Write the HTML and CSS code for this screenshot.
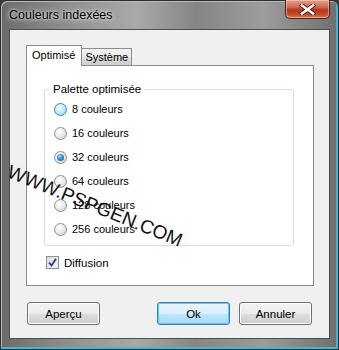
FILE: index.html
```html
<!DOCTYPE html>
<html>

<head>
    <title>Couleurs indexées</title>
    <link rel="stylesheet" href="styles.css">
</head>

<body>
    <div class="window">
        <div class="titlebar">
            <span class="title">Couleurs indexées</span>
            <span class="close">
                <svg width="17" height="11" viewBox="0 0 17 11">
                    <path d="M3 1.5 L14 9.5 M14 1.5 L3 9.5" stroke="#3a1a14" stroke-width="4.4" stroke-linecap="square"/>
                    <path d="M3 1.5 L14 9.5 M14 1.5 L3 9.5" stroke="#ffffff" stroke-width="2.6" stroke-linecap="square"/>
                </svg>
            </span>
        </div>

        <div class="client">
            <div class="tabs">
                <span class="tab active">Optimisé</span>
                <span class="tab">Système</span>
            </div>

            <div class="panel">
                <fieldset class="group">
                    <legend>Palette optimisée</legend>
                    <div class="option"><span class="radio hover"></span>8 couleurs</div>
                    <div class="option"><span class="radio"></span>16 couleurs</div>
                    <div class="option"><span class="radio checked"></span>32 couleurs</div>
                    <div class="option"><span class="radio"></span>64 couleurs</div>
                    <div class="option"><span class="radio"></span>128 couleurs</div>
                    <div class="option"><span class="radio"></span>256 couleurs</div>
                </fieldset>

                <div class="check-row">
                    <span class="checkbox">
                        <svg width="9" height="9" viewBox="0 0 9 9">
                            <path d="M1 4.5 L3.5 7.5 L8 0.8" fill="none" stroke="#2a3f8f" stroke-width="1.8"/>
                        </svg>
                    </span>
                    Diffusion
                </div>
            </div>

            <div class="buttons">
                <button class="btn">Aperçu</button>
                <button class="btn default">Ok</button>
                <button class="btn">Annuler</button>
            </div>
        </div>

        <div class="watermark">WWW.PSPGEN.COM</div>
    </div>
</body>

</html>
```

FILE: styles.css
```css
body {
    margin: 0;
    overflow: hidden;
    background-color: #3a3a3a;
    font-family: "Liberation Sans", Arial, sans-serif;
}

.window {
    position: relative;
    width: 339px;
    height: 350px;
    box-sizing: border-box;
    padding: 0 8px 11px 8px;
    border-radius: 7px 7px 0 0;
    border: 1px solid #2e2e2e;
    background: linear-gradient(90deg, #6a6a6a 0%, #8d8d8d 18%, #a9a9a9 40%, #858585 58%, #9c9c9c 78%, #6f6f6f 100%);
    box-shadow: inset -2px -2px 0 #3fb7d6, inset 1px 1px 0 #b8b8b8;
}

.titlebar {
    height: 28px;
    display: flex;
    justify-content: space-between;
    align-items: flex-start;
}

.title {
    margin-top: 7px;
    font-size: 12.5px;
    color: #000;
    text-shadow: 0 0 6px #e8e8e8, 0 0 3px #e8e8e8;
}

.close {
    width: 43px;
    height: 18px;
    margin-top: -1px;
    display: flex;
    align-items: center;
    justify-content: center;
    border: 1px solid #4a2018;
    border-top: none;
    border-radius: 0 0 5px 5px;
    background: linear-gradient(180deg, #e3a08f 0%, #cf6a4f 40%, #b3351a 55%, #c6492c 80%, #e07a55 100%);
    box-shadow: inset 0 0 0 1px rgba(255, 220, 200, 0.5);
}

.client {
    height: 310px;
    box-sizing: border-box;
    border: 1px solid #4e4e4e;
    background-color: #f0f0f0;
    font-size: 11px;
    color: #000;
}

.tabs {
    display: flex;
    align-items: flex-end;
    height: 20px;
    margin: 15px 0 0 16px;
}

.tab {
    height: 16px;
    padding: 0 3px;
    line-height: 17px;
    border: 1px solid #898c95;
    border-bottom: none;
    border-left: none;
    background: linear-gradient(180deg, #f2f2f2 0%, #ebebeb 50%, #dddddd 51%, #cfcfcf 100%);
}

.tab.active {
    height: 20px;
    padding: 0 6px 0 5px;
    line-height: 18px;
    border-left: 1px solid #898c95;
    background: #fff;
    position: relative;
    top: 1px;
    z-index: 1;
}

.panel {
    width: 288px;
    height: 221px;
    box-sizing: border-box;
    border: 1px solid #898c95;
    margin-left: 16px;
    background-color: #fff;
    padding: 17px 0 0 17px;
}

.group {
    width: 250px;
    height: 163px;
    box-sizing: border-box;
    margin: 0;
    padding: 1px 0 0 9px;
    border: 1px solid #d5dfe5;
    border-radius: 3px;
}

.group legend {
    margin-left: -5px;
    padding: 0 4px;
    font-size: 11.5px;
    line-height: 13px;
}

.option {
    display: flex;
    align-items: center;
    height: 24px;
}

.radio {
    width: 11px;
    height: 11px;
    margin-right: 5px;
    border: 1px solid #8e8f8f;
    border-radius: 50%;
    background: radial-gradient(circle at 40% 35%, #ffffff 0%, #ececec 45%, #c9c9c9 100%);
    position: relative;
}

.radio.hover {
    border-color: #3c86b8;
    background: radial-gradient(circle at 40% 35%, #f2fbff 0%, #c4e8fa 50%, #8fcdf0 100%);
}

.radio.checked::after {
    content: "";
    position: absolute;
    left: 2px;
    top: 2px;
    width: 7px;
    height: 7px;
    border-radius: 50%;
    background: radial-gradient(circle at 40% 35%, #9ad8f8 0%, #2a8bd0 50%, #0b3f7a 100%);
}

.check-row {
    display: flex;
    align-items: center;
    margin: 10px 0 0 2px;
    font-size: 11.5px;
}

.checkbox {
    width: 11px;
    height: 11px;
    margin-right: 5px;
    border: 1px solid #8e8f8f;
    display: flex;
    align-items: center;
    justify-content: center;
    background: linear-gradient(135deg, #dcdcdc 0%, #f6f6f6 100%);
}

.buttons {
    display: flex;
    margin-top: 16px;
    padding: 0 17px;
}

.btn {
    width: 73px;
    height: 23px;
    padding: 0;
    font-family: "Liberation Sans", Arial, sans-serif;
    font-size: 11.5px;
    color: #000;
    border: 1px solid #707070;
    border-radius: 3px;
    background: linear-gradient(180deg, #f2f2f2 0%, #ebebeb 50%, #dddddd 51%, #cfcfcf 100%);
    box-shadow: inset 0 0 0 1px #fcfcfc;
}

.btn.default {
    margin-left: auto;
    margin-right: 9px;
    border-color: #3c7fb1;
    background: linear-gradient(180deg, #eaf6fd 0%, #d9f0fc 50%, #bee6fd 51%, #a7d9f5 100%);
    box-shadow: inset 0 0 0 1px #48d2ff;
}

.watermark {
    position: absolute;
    left: 11px;
    top: 161px;
    font-size: 19px;
    line-height: 19px;
    color: #111;
    transform-origin: 0 0;
    transform: rotate(22deg);
    white-space: nowrap;
}
```
